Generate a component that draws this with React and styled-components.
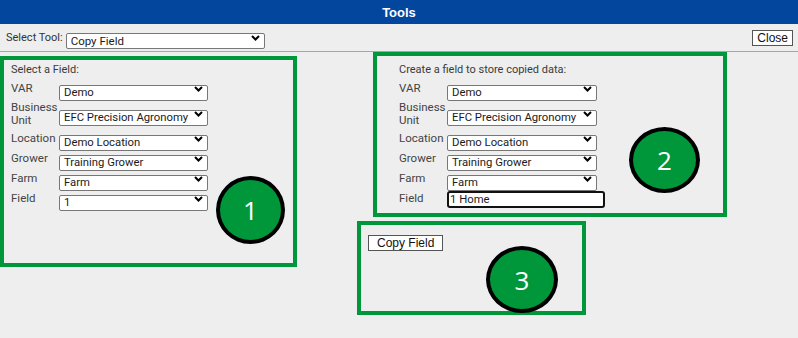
import React from "react";
import styled, { createGlobalStyle } from "styled-components";

const GlobalStyle = createGlobalStyle`
  html, body {
    margin: 0;
    padding: 0;
    background: #eeeeee;
  }
  body {
    font-family: Roboto, "Liberation Sans", Arial, sans-serif;
    overflow: hidden;
  }
`;

const Window = styled.div`
  width: 798px;
  height: 338px;
  background: #eeeeee;
  display: flex;
  flex-direction: column;
  overflow: hidden;
`;

const TitleBar = styled.div`
  height: 24px;
  flex: none;
  background: #03469d;
  color: #ffffff;
  display: flex;
  align-items: center;
  justify-content: center;
  font: bold 13px "Liberation Sans", Arial, sans-serif;
`;

const Toolbar = styled.div`
  height: 27px;
  flex: none;
  border-bottom: 1px solid #a6a6a6;
  display: flex;
  align-items: center;
  padding: 0 5px 0 6px;
  gap: 3px;
`;

const ToolLabel = styled.span`
  font-size: 11px;
  color: #333;
`;

const PlainButton = styled.button`
  height: 16px;
  padding: 0 ${(p) => p.$pad || 4}px;
  background: #ffffff;
  border: 1px solid #555;
  border-radius: 0;
  font: 12px "Liberation Sans", Arial, sans-serif;
  color: #111;
  line-height: 14px;
  margin-left: ${(p) => (p.$right ? "auto" : "0")};
`;

const Main = styled.div`
  display: flex;
  align-items: flex-start;
`;

const Column = styled.div`
  display: flex;
  flex-direction: column;
  margin-left: ${(p) => p.$ml || 0}px;
`;

const Box = styled.div`
  position: relative;
  box-sizing: border-box;
  width: ${(p) => p.$w}px;
  height: ${(p) => p.$h}px;
  margin-top: ${(p) => p.$mt || 0}px;
  margin-left: ${(p) => p.$ml || 0}px;
  border: 4px solid #00963a;
  padding: ${(p) => p.$pad};
`;

const Heading = styled.div`
  font-size: 11px;
  line-height: 14px;
  color: #3a3a3a;
  margin-bottom: 4px;
`;

const Form = styled.div`
  display: grid;
  grid-template-columns: 48px auto;
  row-gap: 4px;
  align-items: center;
  justify-items: start;
`;

const Label = styled.div`
  align-self: start;
  font-size: 11.5px;
  line-height: ${(p) => (p.$two ? 13 : 14)}px;
  color: #444;
`;

const SelectWrap = styled.div`
  position: relative;
  width: ${(p) => p.$w}px;
  height: 16px;
`;

const NativeSelect = styled.select`
  appearance: none;
  -webkit-appearance: none;
  box-sizing: border-box;
  width: 100%;
  height: 100%;
  margin: 0;
  padding: 0 16px 0 4px;
  background: #ffffff;
  border: 1px solid #777;
  border-radius: 2px;
  font-family: Roboto, "Liberation Sans", Arial, sans-serif;
  font-size: ${(p) => p.$fs || 11.3}px;
  color: #1a1a1a;
  line-height: 14px;
  outline: none;
`;

const Chevron = styled.svg`
  position: absolute;
  right: ${(p) => p.$r || 5}px;
  top: 5px;
  pointer-events: none;
`;

const TextInput = styled.input`
  box-sizing: border-box;
  width: 158px;
  height: 17px;
  margin: 0;
  padding: 0 1px;
  background: #ffffff;
  border: 2px solid #111;
  border-radius: 3px;
  font-family: Roboto, "Liberation Sans", Arial, sans-serif;
  font-size: 11.3px;
  color: #1a1a1a;
  caret-color: #000;
  outline: none;
`;

const Badge = styled.div`
  position: absolute;
  left: ${(p) => p.$x}px;
  top: ${(p) => p.$y}px;
  width: ${(p) => p.$w}px;
  height: ${(p) => p.$h}px;
  box-sizing: border-box;
  border: 4px solid #000;
  border-radius: 50%;
  background: #00963a;
  color: #ffffff;
  display: flex;
  align-items: center;
  justify-content: center;
  font: 26px "Open Sans", "DejaVu Sans", sans-serif;
`;

const Dropdown = ({ value, width, fs, right }) => (
  <SelectWrap $w={width}>
    <NativeSelect $fs={fs} defaultValue={value}>
      <option>{value}</option>
    </NativeSelect>
    <Chevron $r={right} width="9" height="6" viewBox="0 0 9 6">
      <path d="M1 1l3.5 3.5L8 1" fill="none" stroke="#000" strokeWidth="2" />
    </Chevron>
  </SelectWrap>
);

const rows = [
  ["VAR", "Demo"],
  ["Business Unit", "EFC Precision Agronomy"],
  ["Location", "Demo Location"],
  ["Grower", "Training Grower"],
  ["Farm", "Farm"],
];

const FieldForm = ({ width, lastField }) => (
  <Form>
    {rows.map(([label, value]) => (
      <React.Fragment key={label}>
        <Label $two={label === "Business Unit"}>
          {label === "Business Unit" ? (
            <>
              Business
              <br />
              Unit
            </>
          ) : (
            label
          )}
        </Label>
        <Dropdown value={value} width={width} />
      </React.Fragment>
    ))}
    <Label>Field</Label>
    {lastField}
  </Form>
);

export default function App() {
  return (
    <Window>
      <GlobalStyle />
      <TitleBar>Tools</TitleBar>
      <Toolbar>
        <ToolLabel>Select Tool:</ToolLabel>
        <Dropdown value="Copy Field" width={199} fs={11.5} right={5} />
        <PlainButton $right $pad={4}>
          Close
        </PlainButton>
      </Toolbar>
      <Main>
        <Box $w={297} $h={211} $mt={4} $pad="3px 6px 0 7px">
          <Heading>Select a Field:</Heading>
          <FieldForm width={149} lastField={<Dropdown value="1" width={149} />} />
          <Badge $x={212} $y={116} $w={69} $h={68}>
            1
          </Badge>
        </Box>
        <Column $ml={76}>
          <Box $w={354} $h={165} $pad="7px 6px 0 22px">
            <Heading>Create a field to store copied data:</Heading>
            <FieldForm
              width={150}
              lastField={<TextInput defaultValue="1 Home" autoFocus />}
            />
            <Badge $x={252} $y={71} $w={71} $h={66}>
              2
            </Badge>
          </Box>
          <Box $w={229} $h={94} $mt={4} $ml={-16} $pad="7px 0 0 7px">
            <PlainButton $pad={8}>Copy Field</PlainButton>
            <Badge $x={125} $y={21} $w={72} $h={67}>
              3
            </Badge>
          </Box>
        </Column>
      </Main>
    </Window>
  );
}
